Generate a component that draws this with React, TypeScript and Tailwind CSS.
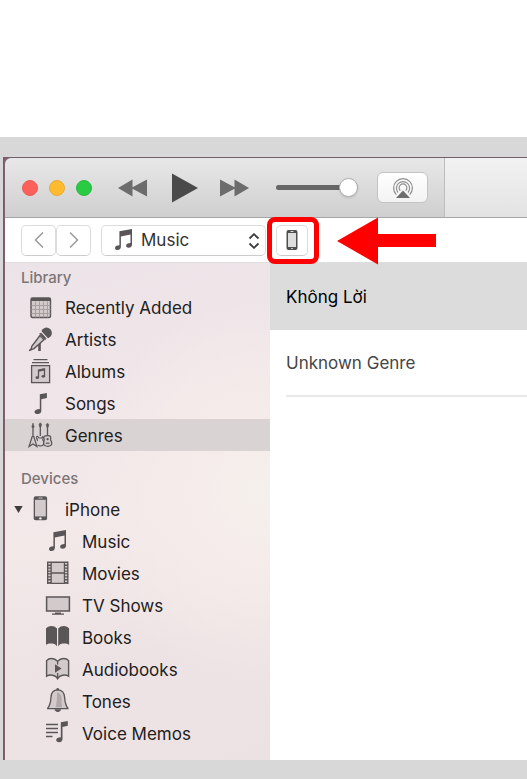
import { useState, type ReactNode } from "react";

const dark = "#5a5556";
const pale = "#d3cacc";

function Glyph({ children, className = "size-7" }: { children: ReactNode; className?: string }) {
  return (
    <svg viewBox="0 0 28 28" className={`shrink-0 ${className}`} fill="none" aria-hidden="true">
      {children}
    </svg>
  );
}

function CalendarIcon() {
  return (
    <Glyph>
      <rect x="4" y="5" width="19.500" height="19.500" rx="1.500" fill={pale} stroke={dark} strokeWidth="1.400" />
      <path d="M4 5h19.500v3H4z" fill={dark} />
      <path d="M8.500 8.500v16M12.500 8.500v16M16.500 8.500v16M20.500 8.500v16M4.500 12.500h19M4.500 16.500h19M4.500 20.500h19" stroke="#a39b9d" strokeWidth="0.900" />
    </Glyph>
  );
}

function MicIcon() {
  return (
    <Glyph>
      <path d="M12.500 16.500V26" stroke={dark} strokeWidth="2.600" />
      <path d="M13 10.500 4.800 21.200l-.6 2.600-2 1.900 2.800-1.300 2-.8L17 14.700z" fill={pale} stroke={dark} strokeWidth="1.400" />
      <circle cx="19.500" cy="8" r="5.400" fill={dark} />
      <path d="m13.600 6.200 7.600 8.200" stroke="#f0e6e9" strokeWidth="1.200" />
      <path d="m12.800 8.200 6 6.300" stroke={dark} strokeWidth="1.600" />
    </Glyph>
  );
}

function AlbumIcon() {
  return (
    <Glyph>
      <path d="M6.500 2.700h14M5 5.600h17" stroke={dark} strokeWidth="1.300" />
      <rect x="4.600" y="8.600" width="18" height="17" fill={pale} stroke={dark} strokeWidth="1.300" />
      <path d="M11.500 20.500v-7.200l6-1.300v7" stroke={dark} strokeWidth="1.300" />
      <path d="m11.500 12.500 6-1.300v2.200l-6 1.300z" fill={dark} />
      <ellipse cx="10.300" cy="20.700" rx="1.800" ry="1.400" fill={dark} />
      <ellipse cx="16.300" cy="19.300" rx="1.800" ry="1.400" fill={dark} />
    </Glyph>
  );
}

function SongIcon() {
  return (
    <Glyph>
      <path d="M12.800 5.200 19.900 4v5l-5.600 1.300V22c0 1.800-1.700 3-3.600 3-2 0-3.200-.9-3.200-2.300 0-1.700 1.900-2.500 5.300-2.800z" fill={dark} />
    </Glyph>
  );
}

function GuitarsIcon() {
  return (
    <Glyph>
      <path d="M6 5v13M13.300 5v10M20.500 5v10" stroke={dark} strokeWidth="1.300" />
      <path d="M6 2 4.800 6.200h2.400zM12 3.200l1.300-1.400 1.300 1.400-.7 2.800h-1.200zM19.200 3.500l1.300-1.300 1.300 1.300-.7 2.700h-1.200z" fill={dark} stroke={dark} strokeWidth=".6" />
      <path d="M5.200 15.500 2 25.500l4-2.500 4 2.500-3.200-10z" fill={pale} stroke={dark} strokeWidth="1.200" />
      <path d="M11 15.500c-1.200-.6-1.800.4-1.300 1.800.4 1.100 1.100 1.500.7 2.700M11 15.500l1 1.500h2.600l1.200-1.500c.9.700.4 1.800 0 2.700-.4 1.200 1.500 2.300.9 4.500-.6 1.900-2.100 2.500-3.700 2.200-1.100-.2-1.700-.4-2.300-.8" stroke={dark} strokeWidth="1.200" />
      <path d="M18.500 14.800c-1.800.2-1.800 1.800-1.300 3.300.4 1.400-.8 2.400-.5 4.400.3 2.100 1.700 2.800 4 2.800 2.600 0 4.100-1 4.100-3.200 0-2-1.500-2.600-1.200-4 .3-1.400.4-2.800-1-3.300-1.100-.3-2.900-.2-4.100 0z" fill={pale} stroke={dark} strokeWidth="1.200" />
      <circle cx="20.600" cy="18.200" r="1.100" fill={dark} />
      <path d="M18.800 22.200h3.600" stroke={dark} strokeWidth="1.200" />
    </Glyph>
  );
}

function PhoneIcon() {
  return (
    <Glyph>
      <rect x="6.700" y="1.300" width="13.400" height="24" rx="2" fill={dark} />
      <rect x="8" y="4.800" width="10.800" height="16.600" fill={pale} />
      <path d="M11.500 3h4" stroke="#d8d0d2" strokeWidth=".9" />
      <circle cx="13.400" cy="23.400" r="1.200" fill="#f3e8ea" />
    </Glyph>
  );
}

function NotesIcon() {
  return (
    <Glyph>
      <path d="M9.400 5.300 22 2.900v15.800c0 1.800-1.400 3.100-3.400 3.100-1.500 0-2.500-.8-2.500-2 0-1.800 1.800-2.600 4.400-2.700V8.500l-9.600 1.900v10.300c0 2-1.500 3.300-3.500 3.300C5.900 24 5 23.100 5 21.900c0-1.700 1.600-2.600 4.400-2.700z" fill={dark} />
    </Glyph>
  );
}

function FilmIcon() {
  return (
    <Glyph>
      <rect x="3" y="2.500" width="21.500" height="22.500" fill={dark} />
      <path d="M7.800 4h12v9.200h-12zM7.800 14.700h12v9h-12z" fill={pale} />
      <path d="M5.400 4v20.500M22.100 4v20.500" stroke={pale} strokeWidth="2.200" strokeDasharray="1.600 1.300" />
    </Glyph>
  );
}

function TvIcon() {
  return (
    <Glyph>
      <rect x="2.600" y="6" width="22.800" height="14" fill={pale} stroke={dark} strokeWidth="1.500" />
      <path d="M11 21.500h6v1H20v1.200H8v-1.200h3z" fill={dark} />
    </Glyph>
  );
}

function BookIcon() {
  return (
    <Glyph>
      <path d="M13 5.500C11.500 3.800 9.500 3 7.500 3 5 3 3.200 3.900 2 5.400v16.400c2.300-1.500 4.200-1.500 6-1.200 2.300.3 4 1 5 3zM14.200 5.500C15.700 3.800 17.700 3 19.700 3c2.500 0 4.300.9 5.400 2.400v16.400c-2.300-1.500-4.100-1.500-5.900-1.200-2.300.3-4 1-5 3z" fill={dark} />
    </Glyph>
  );
}

function AudiobookIcon() {
  return (
    <Glyph>
      <path d="M13.600 6.300C11.800 4.300 9.600 3.500 7.600 3.500 5.400 3.500 3.800 4.200 2.600 5.600v15.600c2-1.200 4-1.300 5.900-1 2.300.4 4 1.400 5.100 3.600 1.100-2.200 2.800-3.200 5.100-3.600 1.900-.3 3.900-.2 5.900 1V5.600c-1.200-1.400-2.800-2.100-5-2.100s-4.200.8-6 2.800z" fill={pale} stroke={dark} strokeWidth="1.400" />
      <path d="M13.600 6.500v3M13.600 18v5" stroke={dark} strokeWidth="1.300" />
      <path d="m11 9.300 6.600 4.200-6.600 4.200z" fill={dark} />
    </Glyph>
  );
}

function BellIcon() {
  return (
    <Glyph>
      <path d="M10.500 22.300h6.600c0 1.500-1.500 2.600-3.300 2.600s-3.300-1.100-3.300-2.600z" fill={dark} />
      <path d="M13.700 2.800c-4.300 0-6.500 3.300-6.700 7.300-.3 5.400-.7 8.200-3.300 11v.6h20.200v-.6c-2.600-2.800-3-5.600-3.300-11-.2-4-2.600-7.300-6.900-7.300z" fill={pale} stroke={dark} strokeWidth="1.300" />
      <path d="M13 5.500c2.800 0 4.300 2.300 4.500 5.600.2 4.200.1 6.500.8 9.200h-6.600c.8-4.500 1.600-9.500 1.300-14.800z" fill="#b3a9ab" />
      <circle cx="13.700" cy="2.200" r="1.300" fill={dark} />
    </Glyph>
  );
}

function MemoIcon() {
  return (
    <Glyph>
      <path d="M2 5.500h12M2 9.500h12M2 13.500h12M2 17.500h6.500" stroke={dark} strokeWidth="1.300" />
      <path d="m16.800 3.300 7-1.200v4.700l-5.300 1.100v12c0 2-1.500 3.300-3.500 3.300-1.700 0-2.800-.9-2.800-2.200 0-1.700 1.600-2.600 4.600-2.800z" fill={dark} />
    </Glyph>
  );
}

type Item = { label: string; icon: ReactNode };

const library: Item[] = [
  { label: "Recently Added", icon: <CalendarIcon /> },
  { label: "Artists", icon: <MicIcon /> },
  { label: "Albums", icon: <AlbumIcon /> },
  { label: "Songs", icon: <SongIcon /> },
  { label: "Genres", icon: <GuitarsIcon /> },
];

const deviceItems: Item[] = [
  { label: "Music", icon: <NotesIcon /> },
  { label: "Movies", icon: <FilmIcon /> },
  { label: "TV Shows", icon: <TvIcon /> },
  { label: "Books", icon: <BookIcon /> },
  { label: "Audiobooks", icon: <AudiobookIcon /> },
  { label: "Tones", icon: <BellIcon /> },
  { label: "Voice Memos", icon: <MemoIcon /> },
];

function TitleBar() {
  return (
    <header className="flex h-[60px] overflow-hidden rounded-tl-md border-b border-[#a6a6a6] bg-linear-to-b from-[#e8e8e8] to-[#cfcfcf]">
      <div className="flex w-[440px] shrink-0 items-center border-r border-[#bdbdbd] pl-[17px]">
        <div className="flex gap-[11px]">
          <button aria-label="Close" className="size-4 rounded-full border border-[#ee5a54] bg-[#fc605b]" />
          <button aria-label="Minimize" className="size-4 rounded-full border border-[#e9ab33] bg-[#fdbc2f]" />
          <button aria-label="Zoom" className="size-4 rounded-full border border-[#25b93c] bg-[#28cb42]" />
        </div>
        <button aria-label="Previous" className="ml-[26px]">
          <svg viewBox="0 0 30 18" className="h-[18px] w-[30px]" fill="#6c6c6c"><path d="M0 9 14.500.5v7.800L29 .5v17l-14.500-7.800v7.800z" /></svg>
        </button>
        <button aria-label="Play" className="ml-6">
          <svg viewBox="0 0 26 30" className="h-[30px] w-[26px]" fill="#4a4a4a"><path d="M0 .5 26 15 0 29.500z" /></svg>
        </button>
        <button aria-label="Next" className="ml-[22px]">
          <svg viewBox="0 0 30 18" className="h-[18px] w-[30px]" fill="#6c6c6c"><path d="M29 9 14.500.5v7.800L0 .5v17l14.500-7.800v7.800z" /></svg>
        </button>
        <input
          type="range"
          aria-label="Volume"
          defaultValue={100}
          className="ml-[26px] h-5 w-[82px] appearance-none bg-transparent [&::-webkit-slider-runnable-track]:h-[5px] [&::-webkit-slider-runnable-track]:rounded-full [&::-webkit-slider-runnable-track]:bg-[#666666] [&::-webkit-slider-thumb]:-mt-[7px] [&::-webkit-slider-thumb]:size-[19px] [&::-webkit-slider-thumb]:appearance-none [&::-webkit-slider-thumb]:rounded-full [&::-webkit-slider-thumb]:border [&::-webkit-slider-thumb]:border-[#b0b0b0] [&::-webkit-slider-thumb]:bg-white [&::-webkit-slider-thumb]:shadow-sm"
        />
        <button aria-label="AirPlay" className="ml-[19px] flex h-[31px] w-[51px] items-center justify-center rounded-md border border-[#c3c3c3] bg-linear-to-b from-white to-[#f3f3f3]">
          <svg viewBox="0 0 22 22" className="size-[22px]" fill="none" stroke="#8f8f8f" strokeWidth="1.200">
            <path d="M4.300 17.700a9.400 9.400 0 1 1 13.400 0M6 15.500a6.600 6.600 0 1 1 10 0M8.300 13.600a3.900 3.900 0 1 1 5.400 0" />
            <path d="m11 13.500 7 7.500H4z" fill="#6e6e6e" stroke="none" />
          </svg>
        </button>
      </div>
      <div className="flex-1 bg-linear-to-b from-[#f2f2f2] to-[#e3e3e3]" />
    </header>
  );
}

const control = "h-[31px] rounded-[5px] border border-[#dcdcdc] border-b-[#cccccc] bg-white";

function NavBar() {
  return (
    <div className="flex h-[45px] items-center border-b border-[#dedede] bg-white pl-4">
      <button aria-label="Back" className={`flex w-[35px] items-center justify-center ${control}`}>
        <svg viewBox="0 0 10 16" className="h-4 w-[10px]" fill="none" stroke="#9a9a9a" strokeWidth="1.500"><path d="M9 .5 1.500 8 9 15.500" /></svg>
      </button>
      <button aria-label="Forward" className={`flex w-[35px] items-center justify-center ${control}`}>
        <svg viewBox="0 0 10 16" className="h-4 w-[10px]" fill="none" stroke="#9a9a9a" strokeWidth="1.500"><path d="m1 .5 7.500 7.500L1 15.500" /></svg>
      </button>
      <div className="relative ml-[10px] w-[165px]">
        <select aria-label="Media type" className={`block w-full appearance-none pt-0.5 pl-[39px] text-[17px] text-[#333333] ${control}`}>
          <option>Music</option>
          <option>Movies</option>
          <option>TV Shows</option>
        </select>
        <span className="pointer-events-none absolute inset-y-0 left-[9px] flex items-center"><NotesIcon /></span>
        <svg viewBox="0 0 12 16" className="pointer-events-none absolute top-2 right-[6px] h-4 w-3" fill="none" stroke="#3c3c3c" strokeWidth="1.800"><path d="M1.500 5.500 6 1.200l4.500 4.300M1.500 10.500 6 14.800l4.500-4.300" /></svg>
      </div>
      <div className="relative ml-[10px]">
        <button aria-label="Device" className={`flex w-8 items-center justify-center ${control}`}>
          <svg viewBox="0 0 12 20" className="h-5 w-3"><rect x=".5" width="11" height="20" rx="2" fill="#4e4e4e" /><path d="M2 3h8v14H2z" fill="#dddddd" /><path d="M4.500 1.500h3M5.200 18.500h1.600" stroke="#dddddd" /></svg>
        </button>
        <span className="pointer-events-none absolute -inset-y-2 -right-[11px] -left-[9px] z-10 rounded-lg border-[5px] border-[#ff0000]" />
        <svg viewBox="0 0 99 48" className="pointer-events-none absolute -top-2 left-[61px] z-10 h-12 w-[99px]" fill="#ff0000"><path d="M0 24 41 .5V17h58v13H41v17.500z" /></svg>
      </div>
    </div>
  );
}

function Row({ item, nested, selected, open, onClick }: { item: Item; nested?: boolean; selected?: boolean; open?: boolean; onClick?: () => void }) {
  return (
    <button
      onClick={onClick}
      aria-expanded={open}
      className={`flex h-8 w-full items-center text-left text-[17px] text-[#222020] ${selected ? "bg-[#dad3d4]" : ""}`}
    >
      <span className={`shrink-0 pl-[9px] ${nested ? "w-[39px]" : "w-[22px]"}`}>
        {open !== undefined && (
          <svg viewBox="0 0 9 7" className={`h-[7px] w-[9px] ${open ? "" : "-rotate-90"}`} fill="#403c3d"><path d="M.3 0h8.400L4.500 7z" /></svg>
        )}
      </span>
      {item.icon}
      <span className="ml-[10px] pt-[3px]">{item.label}</span>
    </button>
  );
}

function Sidebar({ selected, onSelect }: { selected: string; onSelect: (label: string) => void }) {
  const [open, setOpen] = useState(true);
  return (
    <nav className="w-[265px] shrink-0 bg-[radial-gradient(ellipse_at_95%_46%,#f5f0ec_0%,#f5ebea_22%,transparent_50%),linear-gradient(165deg,#ece3e8_0%,#f0e6e9_28%,#f4e9e9_50%,#eee3e4_75%,#ece2e4_100%)] pb-[11px]">
      <h2 className="flex h-7 items-center pt-0.5 pl-4 text-[15px] font-medium text-[#7b7577]">Library</h2>
      {library.map((item) => (
        <Row key={item.label} item={item} selected={item.label === selected} onClick={() => onSelect(item.label)} />
      ))}
      <h2 className="mt-3 flex h-[30px] items-center pt-0.5 pl-4 text-[15px] font-medium text-[#7b7577]">Devices</h2>
      <Row item={{ label: "iPhone", icon: <PhoneIcon /> }} open={open} onClick={() => setOpen(!open)} />
      {open && deviceItems.map((item) => <Row key={item.label} item={item} nested />)}
    </nav>
  );
}

export default function App() {
  const [selected, setSelected] = useState("Genres");
  return (
    <div className="bg-white pt-[137px] font-['Inter','Liberation_Sans',sans-serif]">
      <div className="overflow-hidden bg-[#d8d8d8] pt-5 pb-[19px] pl-[3px]">
        <div className="border-t border-l border-[#735f6c] bg-[#80606f] pl-px">
          <TitleBar />
          <NavBar />
          <div className="flex bg-white">
            <Sidebar selected={selected} onSelect={setSelected} />
            <main className="min-w-0 flex-1 text-[17px]">
              <ul>
                <li className="flex h-[67px] items-center bg-[#dcdcdc] pt-0.5 pl-4 text-black">Không Lời</li>
                <li className="ml-4 flex h-[67px] items-center border-b-2 border-[#e9e9e9] pt-[3px] text-[#454545]">Unknown Genre</li>
              </ul>
            </main>
          </div>
        </div>
      </div>
    </div>
  );
}
